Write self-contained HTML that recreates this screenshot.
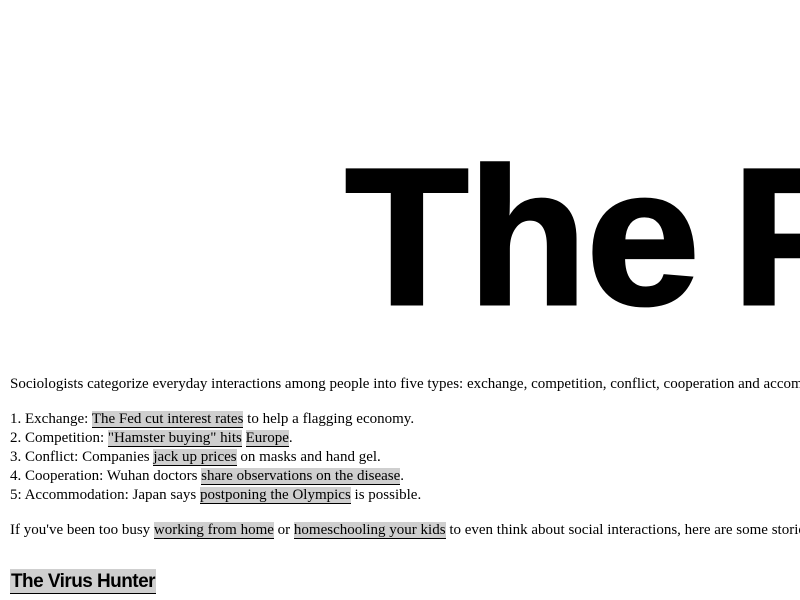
<!DOCTYPE html>
<html><head><meta charset="utf-8"><style>
html,body{margin:0;padding:0;background:#fff;width:800px;height:600px;overflow:hidden;position:relative}
.b{position:absolute;top:140px;font:bold 195px/195px "Liberation Sans",Arial,sans-serif;white-space:nowrap;color:#000;-webkit-text-stroke:3px #000}
.t{position:absolute;left:10px;font:15px/19px "Liberation Serif","Times New Roman",serif;white-space:nowrap;color:#000}
.h{background:#cfcfcf;border-bottom:1px solid #000}
h3{position:absolute;left:10px;top:569px;margin:0;font:bold 19px/23px "Liberation Sans",Arial,sans-serif;letter-spacing:-0.55px;background:#cfcfcf;border-bottom:1px solid #000;padding:1px 1px 0}
</style></head><body>
<div class="b" style="left:345px;transform:scaleX(1.04);transform-origin:left">T</div>
<div class="b" style="left:468px">h</div>
<div class="b" style="left:586px;transform:scaleX(1.05);transform-origin:left">e</div>
<div class="b" style="left:732px">P</div>
<div class="t" style="top:375px">Sociologists categorize everyday interactions among people into five types: exchange, competition, conflict, cooperation and accommodation.</div>
<div class="t" style="top:410px">1. Exchange: <span class="h">The Fed cut interest rates</span> to help a flagging economy.<br>
2. Competition: <span class="h">"Hamster buying" hits</span> <span class="h">Europe</span>.<br>
3. Conflict: Companies <span class="h">jack up prices</span> on masks and hand gel.<br>
4. Cooperation: Wuhan doctors <span class="h">share observations on the disease</span>.<br>
5: Accommodation: Japan says <span class="h">postponing the Olympics</span> is possible.</div>
<div class="t" style="top:521px">If you've been too busy <span class="h">working from home</span> or <span class="h">homeschooling your kids</span> to even think about social interactions, here are some stories.</div>
<h3>The Virus Hunter</h3>
</body></html>
